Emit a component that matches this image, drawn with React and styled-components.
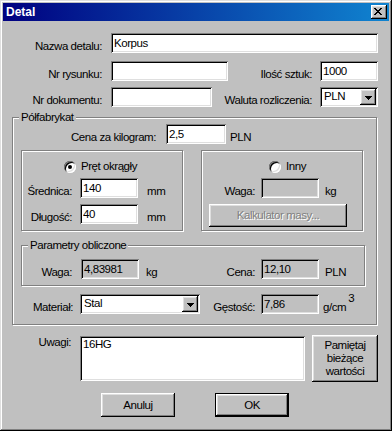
import React from 'react';
import styled, { createGlobalStyle } from 'styled-components';

const GlobalStyle = createGlobalStyle`
  html, body {
    margin: 0;
    padding: 0;
    background: #c0c0c0;
  }
  body {
    font-family: "Liberation Sans", Arial, sans-serif;
    font-size: 11.5px;
    letter-spacing: -0.45px;
    color: #000;
  }
  * {
    box-sizing: border-box;
  }
`;

const raised = `
  box-shadow: inset -1px -1px #000, inset 1px 1px #fff, inset -2px -2px #808080, inset 2px 2px #dfdfdf;
`;

const sunken = `
  box-shadow: inset 1px 1px #808080, inset -1px -1px #fff, inset 2px 2px #000, inset -2px -2px #dfdfdf;
`;

const App = () => {
  return (
    <>
      <GlobalStyle />
      <Window>
        <TitleBar>
          <Title>Detal</Title>
          <CloseButton aria-label="Zamknij">
            <svg width="8" height="7" viewBox="0 0 8 7" shapeRendering="crispEdges">
              <path
                fill="#000"
                d="M0 0h2v1H0zM6 0h2v1H6zM1 1h2v1H1zM5 1h2v1H5zM2 2h4v1H2zM3 3h2v1H3zM2 4h4v1H2zM1 5h2v1H1zM5 5h2v1H5zM0 6h2v1H0zM6 6h2v1H6z"
              />
            </svg>
          </CloseButton>
        </TitleBar>

        <Body>
          <Row $mt={12} $pr={11}>
            <Label $w={99} $gap={9}>Nazwa detalu:</Label>
            <Field $w={267} defaultValue="Korpus" />
          </Row>
          <Row $mt={8} $pr={11}>
            <Label $w={99} $gap={9}>Nr rysunku:</Label>
            <Field $w={117} defaultValue="" />
            <Label $gap={8} $push>Ilość sztuk:</Label>
            <Field $w={58} defaultValue="1000" />
          </Row>
          <Row $mt={6} $pr={11}>
            <Label $w={99} $gap={9}>Nr dokumentu:</Label>
            <Field $w={101} defaultValue="" />
            <Label $gap={8} $push>Waluta rozliczenia:</Label>
            <Combo $w={58} value="PLN" />
          </Row>

          <GroupBox $w={365} $mt={10} $ml={9} $pad="6px 0 10px 0">
            <Legend>Półfabrykat</Legend>
            <Row>
              <Label $w={143} $gap={10}>Cena za kilogram:</Label>
              <Field $w={60} defaultValue="2,5" />
              <Unit $ml={4}>PLN</Unit>
            </Row>

            <SubRow>
              <GroupBox $w={162} $pad="9px 0 6px 0">
                <RadioRow $pl={42}>
                  <Radio $checked />
                  <span>Pręt okrągły</span>
                </RadioRow>
                <Row $mt={5}>
                  <Label $w={50} $gap={8}>Średnica:</Label>
                  <Field $w={58} defaultValue="140" />
                  <Unit $ml={9}>mm</Unit>
                </Row>
                <Row $mt={6}>
                  <Label $w={50} $gap={8}>Długość:</Label>
                  <Field $w={58} defaultValue="40" />
                  <Unit $ml={9}>mm</Unit>
                </Row>
              </GroupBox>

              <GroupBox $w={162} $pad="9px 0 2px 0">
                <RadioRow $pl={67}>
                  <Radio />
                  <span>Inny</span>
                </RadioRow>
                <Row $mt={5}>
                  <Label $w={53} $gap={6}>Waga:</Label>
                  <Field $w={58} $disabled readOnly defaultValue="" />
                  <Unit $ml={6}>kg</Unit>
                </Row>
                <Button $w={138} $h={23} $mt={6} $ml={7} disabled>
                  Kalkulator masy...
                </Button>
              </GroupBox>
            </SubRow>

            <GroupBox $w={344} $mt={14} $ml={8} $pad="13px 0 6px 0">
              <Legend>Parametry obliczone</Legend>
              <Row>
                <Label $w={50} $gap={9}>Waga:</Label>
                <Field $w={58} $disabled readOnly defaultValue="4,83981" />
                <Unit $ml={7} $w={19}>kg</Unit>
                <Label $w={90} $gap={6}>Cena:</Label>
                <Field $w={58} $disabled readOnly defaultValue="12,10" />
                <Unit $ml={6}>PLN</Unit>
              </Row>
            </GroupBox>

            <Row $mt={8}>
              <Label $w={60} $gap={7}>Materiał:</Label>
              <Combo $w={120} value="Stal" />
              <Label $w={55} $gap={6}>Gęstość:</Label>
              <Field $w={58} $disabled readOnly defaultValue="7,86" />
              <Unit $ml={4}>
                g/cm<Sup>3</Sup>
              </Unit>
            </Row>
          </GroupBox>

          <NotesRow>
            <Label $w={68} $gap={9} $mt={1}>Uwagi:</Label>
            <Notes defaultValue="16HG" />
            <Button $w={66} $h={47} $ml={7}>
              Pamiętaj
              <br />
              bieżące
              <br />
              wartości
            </Button>
          </NotesRow>

          <ButtonRow>
            <Button $w={74} $h={24}>Anuluj</Button>
            <Button $w={74} $h={24} $default>OK</Button>
          </ButtonRow>
        </Body>
      </Window>
    </>
  );
};

const Combo = ({ $w, value }) => (
  <ComboBox $w={$w}>
    <ComboValue>{value}</ComboValue>
    <ComboArrow>
      <svg width="7" height="4" viewBox="0 0 7 4" shapeRendering="crispEdges">
        <path fill="#000" d="M0 0h7v1H0zM1 1h5v1H1zM2 2h3v1H2zM3 3h1v1H3z" />
      </svg>
    </ComboArrow>
  </ComboBox>
);

export default App;

// Styled Components

const Window = styled.div`
  width: 392px;
  height: 431px;
  padding: 3px;
  background: #c0c0c0;
  box-shadow: inset -1px -1px #000, inset 1px 1px #dfdfdf, inset -2px -2px #808080, inset 2px 2px #fff;
  display: flex;
  flex-direction: column;
`;

const TitleBar = styled.div`
  height: 18px;
  padding: 0 2px 0 3px;
  background: linear-gradient(to right, #000080, #1084d0);
  display: flex;
  align-items: center;
  justify-content: space-between;
`;

const Title = styled.span`
  color: #fff;
  font-weight: bold;
  font-size: 12px;
  letter-spacing: 0;
  line-height: 18px;
`;

const CloseButton = styled.button`
  width: 16px;
  height: 14px;
  padding: 3px 0 0 3px;
  border: none;
  background: #c0c0c0;
  display: flex;
  align-items: flex-start;
  justify-content: flex-start;
  ${raised}

  svg {
    display: block;
  }
`;

const Body = styled.div`
  flex: 1;
  display: flex;
  flex-direction: column;
`;

const Row = styled.div`
  display: flex;
  align-items: flex-end;
  height: 20px;
  flex-shrink: 0;
  margin-top: ${(p) => p.$mt || 0}px;
  padding-right: ${(p) => p.$pr || 0}px;
`;

const Label = styled.span`
  flex-shrink: 0;
  width: ${(p) => (p.$w ? `${p.$w}px` : 'auto')};
  margin-right: ${(p) => p.$gap || 0}px;
  margin-left: ${(p) => (p.$push ? 'auto' : '0')};
  margin-top: ${(p) => p.$mt || 0}px;
  text-align: right;
  line-height: 13px;
  white-space: nowrap;
`;

const Unit = styled.span`
  flex-shrink: 0;
  width: ${(p) => (p.$w ? `${p.$w}px` : 'auto')};
  margin-left: ${(p) => p.$ml || 0}px;
  line-height: 13px;
  white-space: nowrap;
`;

const Sup = styled.sup`
  font-size: inherit;
  line-height: 0;
  vertical-align: 9px;
  margin-left: 2px;
`;

const Field = styled.input`
  flex-shrink: 0;
  width: ${(p) => p.$w}px;
  height: 20px;
  padding: 3px 2px 4px 3px;
  border: none;
  outline: none;
  background: ${(p) => (p.$disabled ? '#c0c0c0' : '#fff')};
  color: #000;
  font: inherit;
  letter-spacing: inherit;
  line-height: 13px;
  ${sunken}
`;

const ComboBox = styled.div`
  flex-shrink: 0;
  width: ${(p) => p.$w}px;
  height: 20px;
  padding: 2px;
  background: #fff;
  display: flex;
  ${sunken}
`;

const ComboValue = styled.span`
  flex: 1;
  padding: 1px 0 0 2px;
  line-height: 13px;
`;

const ComboArrow = styled.span`
  width: 16px;
  height: 16px;
  background: #c0c0c0;
  display: flex;
  align-items: center;
  justify-content: center;
  ${raised}

  svg {
    display: block;
    margin-top: 1px;
  }
`;

const GroupBox = styled.div`
  position: relative;
  flex-shrink: 0;
  width: ${(p) => p.$w}px;
  margin: ${(p) => p.$mt || 0}px 0 0 ${(p) => p.$ml || 0}px;
  padding: ${(p) => p.$pad || '0'};
  border: 1px solid #808080;
  box-shadow: inset 1px 1px #fff, 1px 1px #fff;
  display: flex;
  flex-direction: column;
`;

const Legend = styled.span`
  position: absolute;
  top: -7px;
  left: 6px;
  padding: 0 2px;
  background: #c0c0c0;
  line-height: 13px;
  white-space: nowrap;
`;

const SubRow = styled.div`
  display: flex;
  gap: 18px;
  margin-top: 6px;
  padding-left: 8px;
`;

const RadioRow = styled.div`
  display: flex;
  align-items: center;
  gap: 5px;
  height: 13px;
  line-height: 13px;
  padding-left: ${(p) => p.$pl}px;
`;

const Radio = styled.span`
  position: relative;
  flex-shrink: 0;
  width: 12px;
  height: 12px;
  border-radius: 50%;
  background: #fff;
  box-shadow: inset 1px 1px #808080, inset -1px -1px #fff, inset 2px 2px #000, inset -2px -2px #dfdfdf;

  &::after {
    content: '';
    display: ${(p) => (p.$checked ? 'block' : 'none')};
    position: absolute;
    left: 4px;
    top: 4px;
    width: 4px;
    height: 4px;
    border-radius: 50%;
    background: #000;
  }
`;

const Button = styled.button`
  flex-shrink: 0;
  width: ${(p) => p.$w}px;
  height: ${(p) => p.$h}px;
  margin: ${(p) => p.$mt || 0}px 0 0 ${(p) => p.$ml || 0}px;
  padding: 0;
  border: ${(p) => (p.$default ? '1px solid #000' : 'none')};
  background: #c0c0c0;
  color: #000;
  font: inherit;
  letter-spacing: inherit;
  line-height: 13px;
  text-align: center;
  ${raised}

  &:disabled {
    color: #808080;
    text-shadow: 1px 1px #fff;
  }
`;

const NotesRow = styled.div`
  display: flex;
  align-items: flex-start;
  height: 47px;
  margin-top: 10px;
`;

const Notes = styled.textarea`
  flex-shrink: 0;
  width: 225px;
  height: 45px;
  margin-top: 1px;
  padding: 2px 3px;
  border: none;
  outline: none;
  resize: none;
  overflow: hidden;
  background: #fff;
  font: inherit;
  letter-spacing: inherit;
  line-height: 13px;
  ${sunken}
`;

const ButtonRow = styled.div`
  display: flex;
  gap: 40px;
  margin-top: 11px;
  padding-left: 98px;
`;
